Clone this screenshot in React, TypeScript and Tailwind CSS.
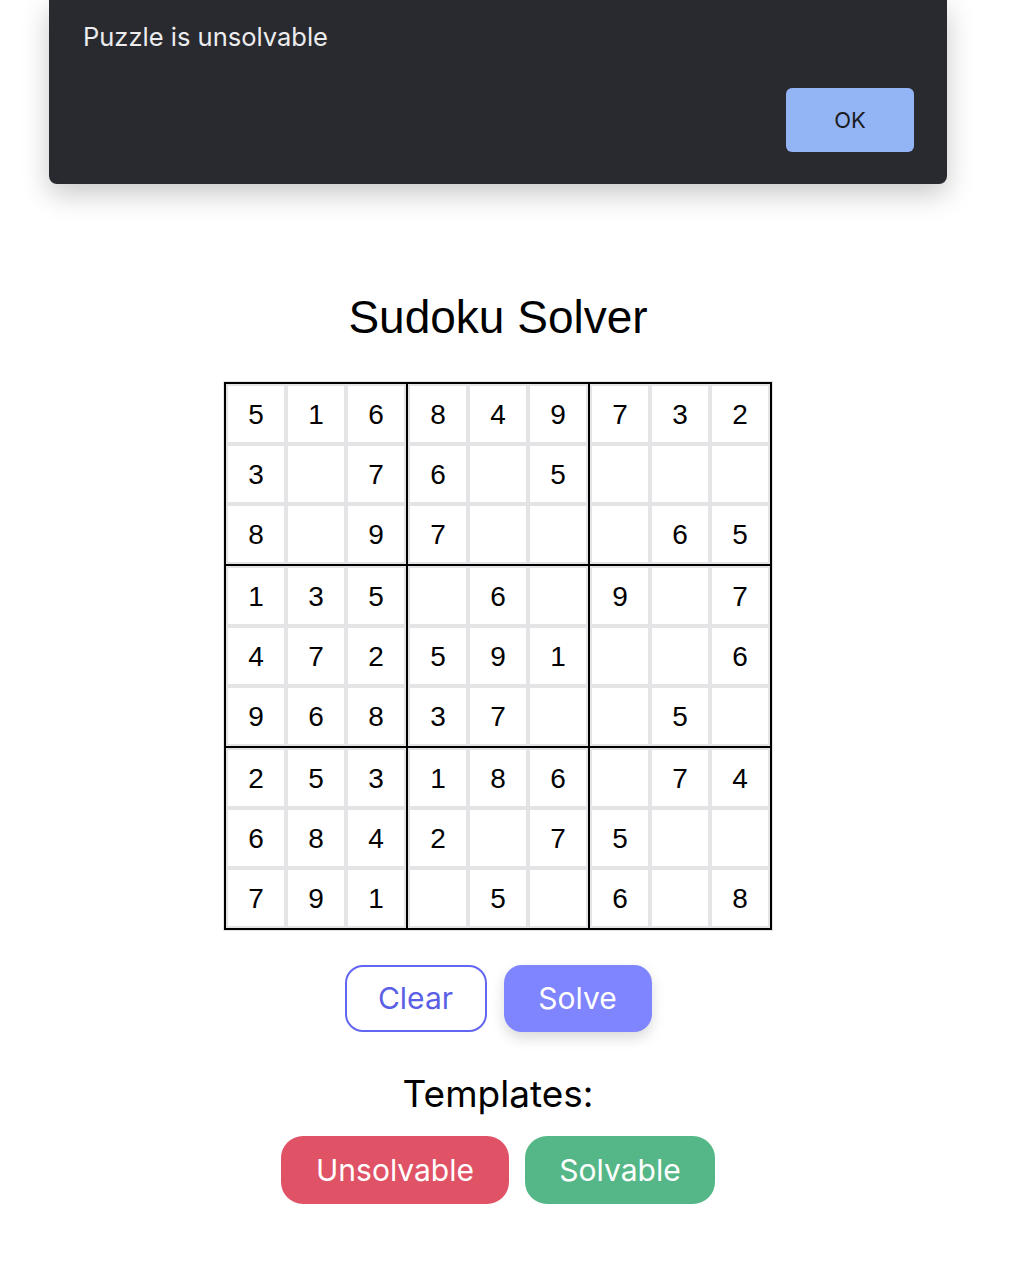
import React from 'react';

const puzzle: (number | null)[][] = [
  [5, 1, 6, 8, 4, 9, 7, 3, 2],
  [3, null, 7, 6, null, 5, null, null, null],
  [8, null, 9, 7, null, null, null, 6, 5],
  [1, 3, 5, null, 6, null, 9, null, 7],
  [4, 7, 2, 5, 9, 1, null, null, 6],
  [9, 6, 8, 3, 7, null, null, 5, null],
  [2, 5, 3, 1, 8, 6, null, 7, 4],
  [6, 8, 4, 2, null, 7, 5, null, null],
  [7, 9, 1, null, 5, null, 6, null, 8],
];

const boxes = [0, 1, 2, 3, 4, 5, 6, 7, 8];

function Box({ index }: { index: number }) {
  const br = Math.floor(index / 3) * 3;
  const bc = (index % 3) * 3;
  const cells: (number | null)[] = [];
  for (let r = 0; r < 3; r++) {
    for (let c = 0; c < 3; c++) cells.push(puzzle[br + r][bc + c]);
  }
  return (
    <div className="grid grid-cols-3 gap-[4px] p-[2px] bg-[#e4e4e7]">
      {cells.map((v, i) => (
        <div
          key={i}
          className="w-[56px] h-[56px] pt-[2px] bg-white flex items-center justify-center text-[28px] text-black font-['Liberation_Sans',Arial,sans-serif]"
        >
          {v ?? ''}
        </div>
      ))}
    </div>
  );
}

export default function App() {
  return (
    <div className="relative min-h-[1272px] bg-white">
      {/* alert dialog */}
      <div className="absolute left-[49px] top-0 w-[898px] h-[184px] bg-[#292a2f] rounded-b-[8px] shadow-[0_10px_28px_rgba(0,0,0,0.22)] z-10 font-['Inter',sans-serif]">
        <p className="absolute left-[34px] top-[22px] text-[25.5px] leading-[30px] text-[#ececee]">Puzzle is unsolvable</p>
        <button className="absolute right-[33px] bottom-[32px] w-[128px] h-[64px] bg-[#93b4f5] rounded-[6px] text-[22px] text-[#1b1b1f]">
          OK
        </button>
      </div>

      <div className="w-[996px] flex flex-col items-center pt-[290px]">
        <h1 className="text-[46px] leading-[54px] text-black font-['Liberation_Sans',Arial,sans-serif]">Sudoku Solver</h1>

        <div className="mt-[37px] border border-[#e4e4e7]">
          <div className="border-2 border-black">
            <div className="grid grid-cols-3 gap-[2px] bg-black">
              {boxes.map((b) => (
                <Box key={b} index={b} />
              ))}
            </div>
          </div>
        </div>

        <div className="mt-[34px] flex gap-[17px] font-['Inter',sans-serif]">
          <button className="w-[142px] h-[67px] border-2 border-[#6366f1] rounded-[18px] bg-white text-[30px] text-[#5b5fe6]">
            Clear
          </button>
          <button className="w-[148px] h-[67px] rounded-[18px] bg-[#7f84ff] text-[30px] text-white shadow-[0_6px_14px_rgba(0,0,0,0.15)]">
            Solve
          </button>
        </div>

        <h2 className="mt-[40px] text-[37px] leading-[44px] text-black font-['Inter',sans-serif]">Templates:</h2>

        <div className="mt-[20px] flex gap-[16px] font-['Inter',sans-serif]">
          <button className="w-[228px] h-[68px] rounded-[22px] bg-[#e05265] text-[30px] text-white">Unsolvable</button>
          <button className="w-[190px] h-[68px] rounded-[22px] bg-[#55b787] text-[30px] text-white">Solvable</button>
        </div>
      </div>
    </div>
  );
}
